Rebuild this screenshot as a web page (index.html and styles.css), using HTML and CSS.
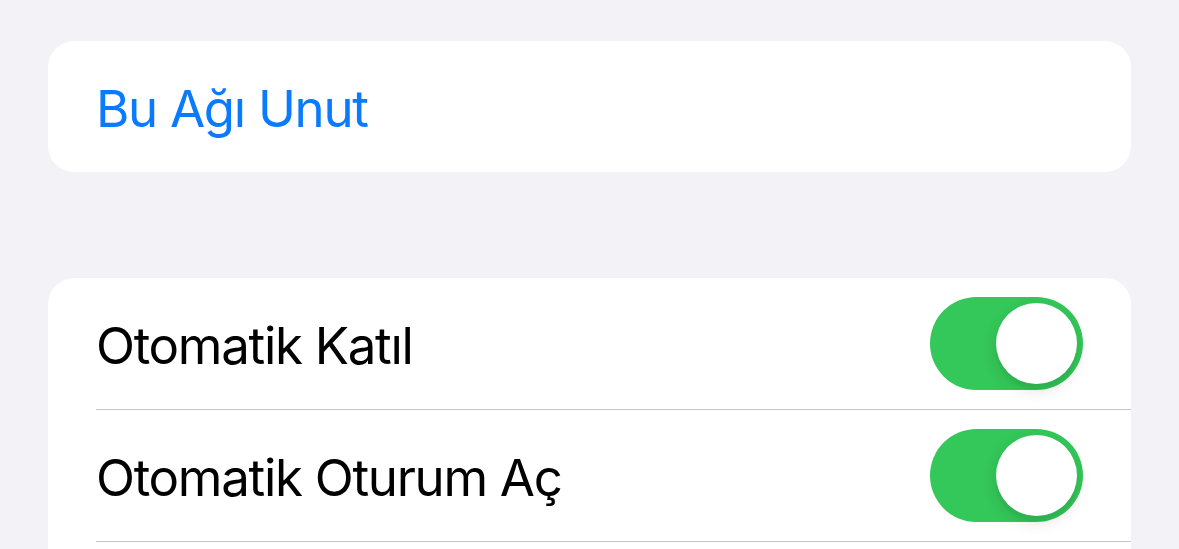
FILE: index.html
```html
<!DOCTYPE html>
<html lang="tr">
<head>
   <meta charset="UTF-8">
   <meta name="viewport" content="width=device-width, initial-scale=1.0">
   <title>Wi-Fi</title>
   <link rel="stylesheet" href="styles.css">
</head>
<body>

   <div class="settings">
      <div class="group">
         <div class="row">
            <div class="row-inner">
               <span class="label label-link">Bu Ağı Unut</span>
            </div>
         </div>
      </div>

      <div class="group group-toggles">
         <div class="row">
            <div class="row-inner with-sep">
               <span class="label">Otomatik Katıl</span>
               <span class="switch on"><span class="knob"></span></span>
            </div>
         </div>
         <div class="row">
            <div class="row-inner with-sep">
               <span class="label">Otomatik Oturum Aç</span>
               <span class="switch on"><span class="knob"></span></span>
            </div>
         </div>
      </div>
   </div>

</body>
</html>
```

FILE: styles.css
```css
html, body {
   margin: 0;
   padding: 0;
   background: #f2f2f7;
   font-family: Inter, "Noto Sans", sans-serif;
   -webkit-font-smoothing: antialiased;
   overflow: hidden;
}

.settings {
   padding: 41px 48px 0 48px;
   display: flex;
   flex-direction: column;
   gap: 106px;
}

.group {
   background: #fff;
   border-radius: 26px;
   overflow: hidden;
}

/* liste ekranın altında devam ediyor */
.group-toggles {
   padding-bottom: 8px;
   border-bottom-left-radius: 0;
   border-bottom-right-radius: 0;
}

.row {
   padding-left: 48px;
}

.row-inner {
   height: 131px;
   display: flex;
   align-items: center;
   justify-content: space-between;
   padding-right: 48px;
}

.with-sep {
   border-bottom: 1px solid #c6c6c8;
}

.label {
   font-size: 51px;
   line-height: 60px;
   letter-spacing: -1.3px;
   color: #000;
   padding-top: 4px;
}

.label-link {
   color: #0a7aff;
}

/* iOS anahtar */
.switch {
   width: 153px;
   height: 93px;
   border-radius: 47px;
   background: #e9e9eb;
   box-sizing: border-box;
   padding: 6px;
   display: flex;
   justify-content: flex-start;
}

.switch.on {
   background: #34c759;
   justify-content: flex-end;
}

.knob {
   width: 81px;
   height: 81px;
   border-radius: 50%;
   background: #fff;
   box-shadow: 0 6px 16px rgba(0, 0, 0, 0.12), 0 6px 2px rgba(0, 0, 0, 0.03);
}
```
